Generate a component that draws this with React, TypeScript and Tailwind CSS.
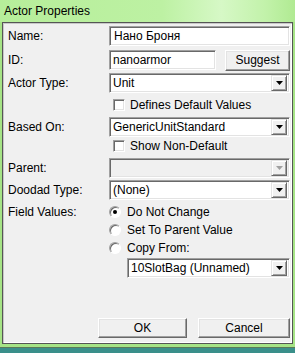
import React from "react";

const font = { fontFamily: '"Liberation Sans", Arial, sans-serif' };

function Sunken({ children, className = "", disabled = false }: { children?: React.ReactNode; className?: string; disabled?: boolean }) {
  return (
    <div
      className={`h-[20px] border border-t-[#a0a0a0] border-l-[#a0a0a0] border-b-white border-r-white shadow-[inset_1px_1px_0_#696969,inset_-1px_-1px_0_#e3e3e3] ${disabled ? "bg-[#f0f0f0]" : "bg-white"} flex items-center ${className}`}
    >
      {children}
    </div>
  );
}

function Arrow({ disabled = false }: { disabled?: boolean }) {
  return (
    <div className="ml-auto mr-[2px] w-[16px] h-[16px] bg-[#f0f0f0] border border-t-[#e3e3e3] border-l-[#e3e3e3] border-b-[#696969] border-r-[#696969] shadow-[inset_1px_1px_0_#ffffff,inset_-1px_-1px_0_#a0a0a0] flex items-center justify-center">
      <svg width="7" height="4" viewBox="0 0 7 4">
        <polygon points="0,0 7,0 3.5,4" fill={disabled ? "#a0a0a0" : "#000"} />
      </svg>
    </div>
  );
}

function Combo({ text, className = "", disabled = false }: { text?: string; className?: string; disabled?: boolean }) {
  return (
    <Sunken className={className} disabled={disabled}>
      <span className="pl-[3px] text-[12px] leading-none text-black whitespace-nowrap">{text}</span>
      <Arrow disabled={disabled} />
    </Sunken>
  );
}

function Button({ label, className = "" }: { label: string; className?: string }) {
  return (
    <div
      className={`bg-[#f0f0f0] border border-t-[#ffffff] border-l-[#ffffff] border-b-[#696969] border-r-[#696969] shadow-[inset_-1px_-1px_0_#a0a0a0,inset_1px_1px_0_#e3e3e3] flex items-center justify-center text-[12px] text-black ${className}`}
    >
      {label}
    </div>
  );
}

function Check({ label }: { label: string }) {
  return (
    <div className="flex items-center gap-[5px] pl-[110px]">
      <div className="w-[12px] h-[12px] bg-white border border-t-[#a0a0a0] border-l-[#a0a0a0] border-b-white border-r-white shadow-[inset_1px_1px_0_#696969,inset_-1px_-1px_0_#e3e3e3]" />
      <span className="text-[12px] text-black">{label}</span>
    </div>
  );
}

function Radio({ label, checked = false }: { label: string; checked?: boolean }) {
  return (
    <div className="flex items-center gap-[6px]">
      <div className="w-[12px] h-[12px] rounded-full bg-white border border-t-[#a0a0a0] border-l-[#a0a0a0] border-b-white border-r-white shadow-[inset_1px_1px_0_#696969] flex items-center justify-center">
        {checked && <div className="w-[4px] h-[4px] rounded-full bg-black" />}
      </div>
      <span className="text-[12px] text-black">{label}</span>
    </div>
  );
}

function Row({ label, children, className = "" }: { label?: string; children?: React.ReactNode; className?: string }) {
  return (
    <div className={`flex items-center h-[20px] ${className}`}>
      <div className="w-[106px] pl-[5px] text-[12px] text-black">{label}</div>
      <div className="flex-1 flex items-center">{children}</div>
    </div>
  );
}

export default function App() {
  return (
    <div style={font} className="w-[295px] h-[353px] bg-[#a6e486] flex flex-col overflow-hidden">
      <div className="h-[22px] shrink-0 bg-[linear-gradient(90deg,#b6ee9a_0%,#bdf1a3_55%,#d6f8c6_75%,#c2f2aa_90%,#b0ea92_100%)] flex items-center pl-[4px]">
        <span className="text-[12px] text-black">Actor Properties</span>
      </div>
      <div className="mx-[2px] h-[322px] shrink-0 bg-[#f0f0f0] border border-[#555] shadow-[inset_1px_1px_0_#c8c8c8,inset_-1px_-1px_0_#fff] flex flex-col pt-[3px] pr-[2px]">
        <Row label="Name:">
          <Sunken className="w-full">
            <span className="pl-[4px] text-[12px] text-black">Нано Броня</span>
          </Sunken>
        </Row>
        <Row label="ID:" className="mt-[4px]">
          <Sunken className="w-[107px]">
            <span className="pl-[3px] text-[12px] text-black">nanoarmor</span>
          </Sunken>
          <Button label="Suggest" className="ml-auto w-[65px] h-[21px]" />
        </Row>
        <Row label="Actor Type:" className="mt-[3px]">
          <Combo text="Unit" className="w-full" />
        </Row>
        <div className="h-[20px] mt-[2px] flex items-center">
          <Check label="Defines Default Values" />
        </div>
        <Row label="Based On:" className="mt-[2px]">
          <Combo text="GenericUnitStandard" className="w-full" />
        </Row>
        <div className="h-[16px] mt-[1px] flex items-center">
          <Check label="Show Non-Default" />
        </div>
        <Row label="Parent:" className="mt-[4px]">
          <Combo className="w-full" disabled />
        </Row>
        <Row label="Doodad Type:" className="mt-[2px]">
          <Combo text="(None)" className="w-full" />
        </Row>
        <Row label="Field Values:" className="mt-[2px]">
          <Radio label="Do Not Change" checked />
        </Row>
        <div className="h-[16px] flex items-center pl-[106px]">
          <Radio label="Set To Parent Value" />
        </div>
        <div className="h-[16px] mt-[2px] flex items-center pl-[106px]">
          <Radio label="Copy From:" />
        </div>
        <div className="flex pl-[124px] mt-[2px]">
          <Combo text="10SlotBag (Unnamed)" className="w-full" />
        </div>
        <div className="flex mt-auto mb-[5px] gap-[11px] pl-[95px]">
          <Button label="OK" className="w-[89px] h-[20px]" />
          <Button label="Cancel" className="flex-1 h-[20px]" />
        </div>
      </div>
      <div className="h-[3px] shrink-0 bg-[#a6e486]" />
      <div className="h-[1px] shrink-0 bg-[#5a7a5a]" />
      <div className="flex-1 bg-[#3a8f8a]" />
    </div>
  );
}
